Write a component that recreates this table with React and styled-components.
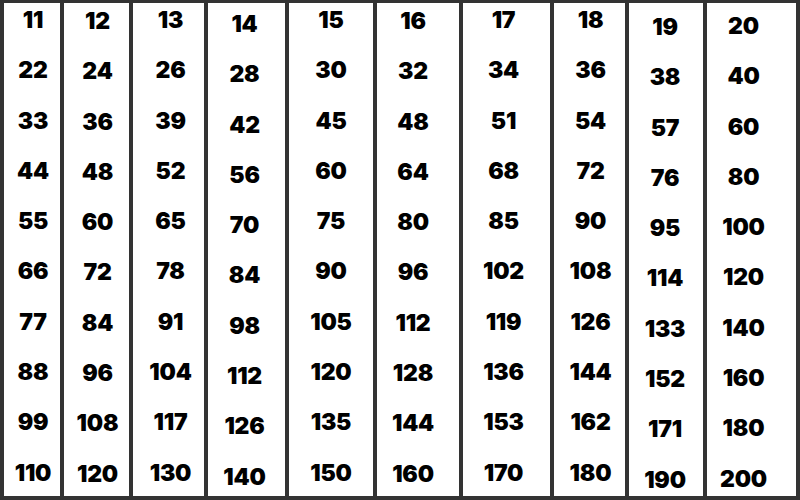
import styled, { createGlobalStyle } from 'styled-components'

const GlobalStyle = createGlobalStyle`
  html, body {
    margin: 0;
    padding: 0;
    background: #ffffff;
  }
`

const TableStyled = styled('div')`
  box-sizing: border-box;
  width: 800px;
  height: 500px;
  display: grid;
  grid-template-columns: 56px 65px 71px 77px 84px 82px 87px 71px 74px 89px;
  column-gap: 4px;
  padding: 3px 4px 4px 4px;
  background-color: #333333;
`

// $shift moves the numbers sideways a little, they are not all dead centre
const ColumnStyled = styled('div')`
  background-color: #ffffff;
  display: flex;
  flex-direction: column;
  align-items: center;
  padding-top: ${(p) => p.$top}px;
  padding-left: ${(p) => Math.max(0, p.$shift * 2)}px;
  padding-right: ${(p) => Math.max(0, -p.$shift * 2)}px;
  overflow: hidden;
`

const CellStyled = styled('span')`
  flex: 0 0 auto;
  height: 50.3px;
  line-height: 24px;
  font-family: Inter, 'DejaVu Sans', sans-serif;
  font-weight: 900;
  font-size: 23px;
  color: #000000;
  letter-spacing: -0.2px;
`

const columns = [
  { base: 11, top: 5, shift: 1 },
  { base: 12, top: 6, shift: 1 },
  { base: 13, top: 5, shift: 2 },
  { base: 14, top: 9, shift: -2 },
  { base: 15, top: 5, shift: 0 },
  { base: 16, top: 6, shift: -5 },
  { base: 17, top: 5, shift: -3 },
  { base: 18, top: 5, shift: 1 },
  { base: 19, top: 12, shift: -1 },
  { base: 20, top: 11, shift: -8 },
]

const rows = [1, 2, 3, 4, 5, 6, 7, 8, 9, 10]

const App = () => {
  return (
    <>
      <GlobalStyle />
      <TableStyled>
        {columns.map((col) => (
          <ColumnStyled key={col.base} $top={col.top} $shift={col.shift}>
            {rows.map((n) => (
              <CellStyled key={n}>{col.base * n}</CellStyled>
            ))}
          </ColumnStyled>
        ))}
      </TableStyled>
    </>
  )
}

export default App
